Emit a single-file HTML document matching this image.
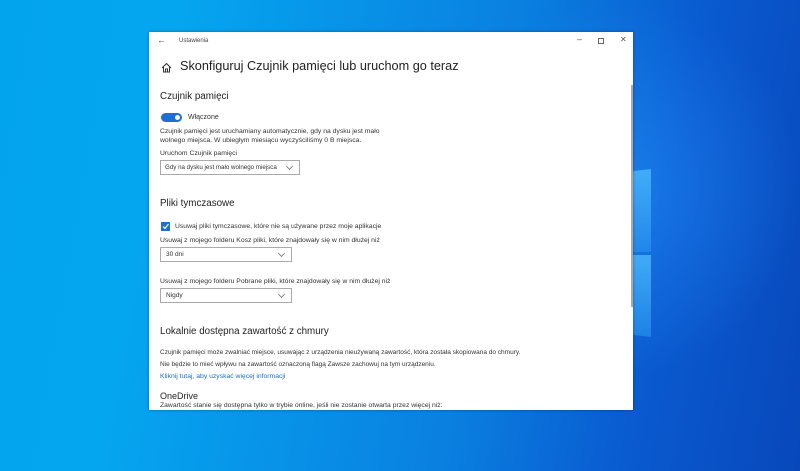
<!DOCTYPE html>
<html style="overflow:hidden;width:800px;height:471px"><head><meta charset="utf-8"><style>
*{margin:0;padding:0;box-sizing:border-box}
body{width:800px;height:471px;overflow:hidden;position:relative;font-family:"Liberation Sans",sans-serif;color:#222;
background:linear-gradient(100deg,#03a4ee 0%,#05a6f0 20%,#0a7fe0 60%,#0a5ad0 80%,#0848bb 100%);}
.glow{position:absolute;left:400px;top:0;width:400px;height:471px;background:radial-gradient(closest-side at 55% 40%,rgba(40,150,255,.5),rgba(40,150,255,0) 100%)}
.pane{position:absolute;background:linear-gradient(180deg,rgba(80,190,255,.75),rgba(40,150,240,.6));}
.win{position:absolute;left:149px;top:32px;width:484px;height:378px;background:#fff;box-shadow:0 0 3px rgba(0,0,0,.35)}
.t{position:absolute;white-space:nowrap}
.s{font-size:7px;color:#333}
.h{font-size:9.8px;color:#222}
.dd{position:absolute;border:1px solid #aaa;height:15px;font-size:6.5px;padding:3px 5px;color:#333}
.dd:after{content:"";position:absolute;right:7px;top:3px;width:4px;height:4px;border-right:1px solid #888;border-bottom:1px solid #888;transform:rotate(45deg)}
</style></head><body>
<div class="glow"></div>
<div class="pane" style="left:630px;top:169px;width:21px;height:83px;clip-path:polygon(0 3%,100% 0,100% 100%,0 100%)"></div>
<div class="pane" style="left:630px;top:255px;width:21px;height:82px;clip-path:polygon(0 0,100% 0,100% 100%,0 97%)"></div>
<div class="win">
 <div class="t" style="left:8px;top:3px;font-size:9px;color:#444">←</div>
 <div class="t" style="left:30px;top:6px;font-size:6px;color:#444">Ustawienia</div>
 <div class="t" style="left:428px;top:2px;font-size:9px;color:#555">–</div>
 <div style="position:absolute;left:449px;top:6px;width:6px;height:6px;border:1px solid #666"></div>
 <div class="t" style="left:471px;top:3px;font-size:8px;color:#555">✕</div>
 <svg style="position:absolute;left:12px;top:30px" width="11" height="11" viewBox="0 0 11 11"><path d="M1 6 L5.5 1.5 L10 6 M2.5 4.5 V10 H8.5 V4.5 M4.5 10 V7 H6.5 V10" fill="none" stroke="#333" stroke-width="1"/></svg>
 <div class="t" style="left:31px;top:27px;font-size:12.7px;color:#222">Skonfiguruj Czujnik pamięci lub uruchom go teraz</div>
 <div style="position:absolute;left:482px;top:53px;width:2px;height:222px;background:#aaa"></div>
 <div class="t h" style="left:11px;top:59px">Czujnik pamięci</div>
 <div style="position:absolute;left:12px;top:81px;width:21px;height:9px;border-radius:5px;background:#1f6fd0"></div>
 <div style="position:absolute;left:26px;top:83px;width:5px;height:5px;border-radius:50%;background:#fff"></div>
 <div class="t s" style="left:39px;top:82px">Włączone</div>
 <div class="t s" style="left:11px;top:95px;line-height:9px;font-size:6.8px">Czujnik pamięci jest uruchamiany automatycznie, gdy na dysku jest mało<br>wolnego miejsca. W ubiegłym miesiącu wyczyściliśmy 0 B miejsca.</div>
 <div class="t s" style="left:11px;top:118px;font-size:6.8px">Uruchom Czujnik pamięci</div>
 <div class="dd" style="left:11px;top:128px;width:140px;padding:3px 4px;font-size:6.2px">Gdy na dysku jest mało wolnego miejsca</div>
 <div class="t h" style="left:11px;top:166px">Pliki tymczasowe</div>
 <div style="position:absolute;left:12px;top:190px;width:9px;height:9px;background:#1f6fd0"></div>
 <svg style="position:absolute;left:12px;top:190px" width="9" height="9"><path d="M2 4.5 L4 6.5 L7.5 2" fill="none" stroke="#fff" stroke-width="1.2"/></svg>
 <div class="t s" style="left:26px;top:191px;font-size:6.8px">Usuwaj pliki tymczasowe, które nie są używane przez moje aplikacje</div>
 <div class="t s" style="left:11px;top:205px;font-size:6.8px">Usuwaj z mojego folderu Kosz pliki, które znajdowały się w nim dłużej niż</div>
 <div class="dd" style="left:11px;top:215px;width:132px">30 dni</div>
 <div class="t s" style="left:11px;top:246px;font-size:6.8px">Usuwaj z mojego folderu Pobrane pliki, które znajdowały się w nim dłużej niż</div>
 <div class="dd" style="left:11px;top:256px;width:132px">Nigdy</div>
 <div class="t h" style="left:11px;top:294px">Lokalnie dostępna zawartość z chmury</div>
 <div class="t s" style="left:11px;top:317px;font-size:6.5px">Czujnik pamięci może zwalniać miejsce, usuwając z urządzenia nieużywaną zawartość, która została skopiowana do chmury.</div>
 <div class="t s" style="left:11px;top:329px;font-size:6.5px">Nie będzie to mieć wpływu na zawartość oznaczoną flagą Zawsze zachowuj na tym urządzeniu.</div>
 <div class="t s" style="left:11px;top:341px;color:#1a6fc8;font-size:6.8px">Kliknij tutaj, aby uzyskać więcej informacji</div>
 <div class="t" style="left:11px;top:359px;font-size:9px;color:#222">OneDrive</div>
 <div class="t s" style="left:11px;top:370px;font-size:6.8px">Zawartość stanie się dostępna tylko w trybie online, jeśli nie zostanie otwarta przez więcej niż:</div>
</div>
</body></html>
